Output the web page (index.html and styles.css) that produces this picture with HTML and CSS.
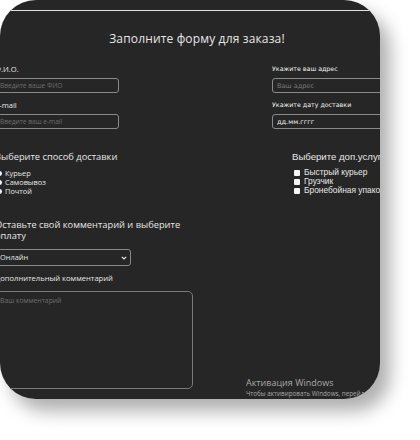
FILE: index.html
```html
<!DOCTYPE html>
<html lang="ru">
<head>
<meta charset="utf-8">
<title>Форма заказа</title>
<link rel="stylesheet" href="styles.css">
</head>
<body>
<div class="card">
  <div class="topbar"></div>
  <h1 class="title">Заполните форму для заказа!</h1>
  <form class="form">
    <div class="row contacts">
      <div class="col-left">
        <label class="lbl">Ф.И.О.</label>
        <input class="field" type="text" placeholder="Введите ваше ФИО">
        <label class="lbl gap">E-mail</label>
        <input class="field" type="text" placeholder="Введите ваш e-mail">
      </div>
      <div class="col-right">
        <label class="lbl-r">Укажите ваш адрес</label>
        <input class="field field-r" type="text" placeholder="Ваш адрес">
        <label class="lbl-r gap">Укажите дату доставки</label>
        <input class="field field-r date" type="text" value="дд.мм.гггг">
      </div>
    </div>
    <div class="row options">
      <div class="delivery">
        <div class="heading">Выберите способ доставки</div>
        <ul class="radios">
          <li><span class="radio"></span>Курьер</li>
          <li><span class="radio"></span>Самовывоз</li>
          <li><span class="radio"></span>Почтой</li>
        </ul>
      </div>
      <div class="extras">
        <div class="heading-r">Выберите доп.услуги</div>
        <ul class="checks">
          <li><span class="check"></span>Быстрый курьер</li>
          <li><span class="check"></span>Грузчик</li>
          <li><span class="check"></span>Бронебойная упаковка</li>
        </ul>
      </div>
    </div>
    <div class="comment">
      <div class="heading wrap">Оставьте свой комментарий и выберите оплату</div>
      <div class="select">
        <span>Онлайн</span>
        <svg class="chev" width="6" height="4" viewBox="0 0 6 4"><path d="M0.8 0.8 L3 3 L5.2 0.8" fill="none" stroke="#e6e6e6" stroke-width="1.2"/></svg>
      </div>
      <div class="lbl small">Дополнительный комментарий</div>
      <textarea class="area" placeholder="Ваш комментарий"></textarea>
    </div>
  </form>
  <div class="activation">
    <div class="act-title">Активация Windows</div>
    <div class="act-sub">Чтобы активировать Windows, перейдите в раздел «Параметры».</div>
  </div>
</div>
</body>
</html>
```
FILE: styles.css
```css
* { box-sizing: border-box; }
html, body { margin: 0; padding: 0; background: #ffffff; }
body { width: 420px; height: 440px; overflow: hidden; }

.card {
  position: relative;
  width: 380px;
  height: 399px;
  background: #262626;
  border-radius: 36px;
  overflow: hidden;
  box-shadow: 10px 12px 18px rgba(0, 0, 0, 0.32);
  color: #e6e6e6;
  font-family: "Open Sans", "DejaVu Sans", sans-serif;
}

.topbar {
  height: 11px;
  border-bottom: 1px solid #e2e2e2;
}

.title {
  margin: 20px 0 0 0;
  font-size: 12px;
  line-height: 16px;
  font-weight: 400;
  text-align: center;
  padding-left: 14px;
  letter-spacing: 0.15px;
}

.form {
  margin-left: -5px;
  margin-top: 17px;
}

.row { display: flex; }

.col-left { width: 277px; flex-shrink: 0; display: flex; flex-direction: column; align-items: flex-start; }
.col-right { flex-shrink: 0; display: flex; flex-direction: column; align-items: flex-start; }

.lbl {
  font-size: 7.6px;
  line-height: 10px;
  height: 10px;
  margin-bottom: 4px;
}
.lbl.gap, .lbl-r.gap { margin-top: 7px; }

.lbl-r {
  font-family: "DejaVu Sans", sans-serif;
  font-size: 6.3px;
  line-height: 10px;
  height: 10px;
  margin-bottom: 4px;
  font-weight: 400;
  color: #f2f2f2;
}

.field {
  width: 124px;
  height: 15px;
  margin: 0;
  padding: 0 0 0 4px;
  background: transparent;
  border: 1px solid #8a8a8a;
  border-radius: 3px;
  color: #e6e6e6;
  font-family: "Open Sans", sans-serif;
  font-size: 6.6px;
  outline: none;
}
.field::placeholder { color: #6d6d6d; }
.field-r { width: 130px; font-family: "DejaVu Sans", sans-serif; }
.field-r::placeholder { color: #777; }
.date { font-size: 6.6px; font-weight: 400; color: #f0f0f0; }

.options { margin-top: 22px; }
.delivery { width: 297px; flex-shrink: 0; }
.extras { flex-shrink: 0; }

.heading {
  font-size: 9.3px;
  line-height: 12px;
}

.radios, .checks {
  list-style: none;
  margin: 6px 0 0 0;
  padding: 0;
}
.radios li {
  display: flex;
  align-items: center;
  font-size: 7.4px;
  line-height: 9px;
  height: 9px;
}
.radio {
  width: 5px;
  height: 5px;
  border-radius: 50%;
  background: #f0f0f0;
  margin-left: 2px;
  margin-right: 3px;
}

.heading-r {
  font-family: "Liberation Sans", Arial, sans-serif;
  font-size: 9.6px;
  line-height: 12px;
  white-space: nowrap;
}
.checks { margin-top: 5px; }
.checks li {
  display: flex;
  align-items: center;
  font-family: "Liberation Sans", Arial, sans-serif;
  font-size: 8.4px;
  line-height: 9px;
  height: 9px;
  white-space: nowrap;
}
.check {
  width: 6px;
  height: 6px;
  background: #f4f4f4;
  border-radius: 1px;
  margin-left: 2px;
  margin-right: 4px;
}

.comment {
  margin-top: 23px;
  width: 200px;
  display: flex;
  flex-direction: column;
  align-items: flex-start;
}
.heading.wrap { width: 188px; line-height: 11px; }

.select {
  position: relative;
  margin-top: 8px;
  width: 136px;
  height: 17px;
  border: 1px solid #8a8a8a;
  border-radius: 3px;
  font-size: 7.4px;
  line-height: 15px;
  padding-left: 4px;
}
.chev { position: absolute; right: 3px; top: 6px; }

.lbl.small { margin-top: 7px; margin-bottom: 8px; }

.area {
  display: block;
  width: 198px;
  height: 98px;
  margin: 0;
  padding: 4px 4px;
  background: transparent;
  border: 1px solid #7a7a7a;
  border-radius: 5px;
  resize: none;
  color: #e6e6e6;
  font-family: "Open Sans", sans-serif;
  font-size: 6.8px;
  outline: none;
}
.area::placeholder { color: #6d6d6d; }

.activation {
  position: absolute;
  left: 246px;
  top: 377px;
  color: #a8a8a8;
  font-family: "Open Sans", sans-serif;
  white-space: nowrap;
}
.act-title { font-size: 9px; line-height: 12px; }
.act-sub { font-size: 6.3px; line-height: 9px; margin-top: 0px; }
```
